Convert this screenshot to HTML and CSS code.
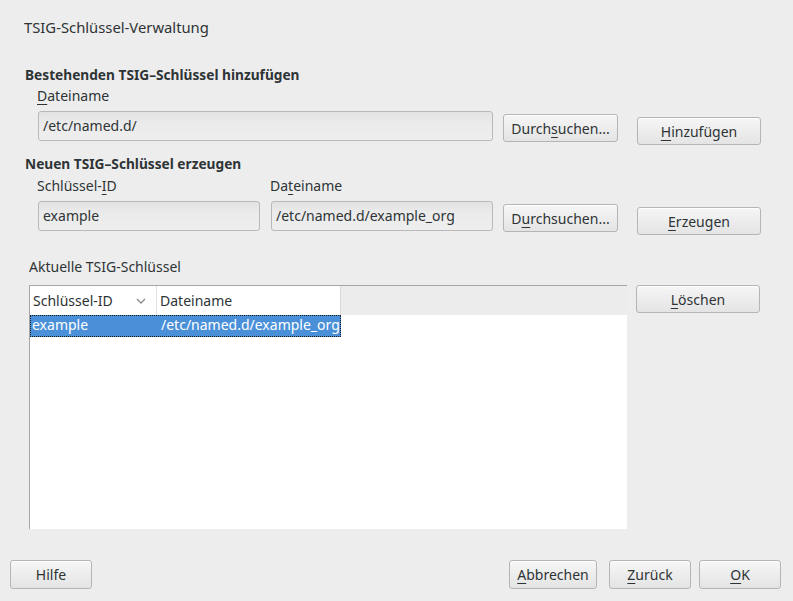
FILE: index.html
```html
<!DOCTYPE html>
<html lang="de">
<head>
<meta charset="utf-8">
<title>TSIG-Schlüssel-Verwaltung</title>
<link rel="stylesheet" href="styles.css">
</head>
<body>
<div class="dialog">
  <div class="title">TSIG-Schlüssel-Verwaltung</div>

  <div class="heading h1">Bestehenden TSIG–Schlüssel hinzufügen</div>
  <div class="label lab1"><u>D</u>ateiname</div>
  <div class="row row1">
    <div class="input wide">/etc/named.d/</div>
    <button class="btn browse b1">Durch<u>s</u>uchen...</button>
    <button class="btn action a1"><u>H</u>inzufügen</button>
  </div>

  <div class="heading h2">Neuen TSIG–Schlüssel erzeugen</div>
  <div class="row row2">
    <div class="field">
      <div class="label">Schlüssel-<u>I</u>D</div>
      <div class="input half">example</div>
    </div>
    <div class="field">
      <div class="label">Da<u>t</u>einame</div>
      <div class="input half">/etc/named.d/example_org</div>
    </div>
    <button class="btn browse b2">D<u>u</u>rchsuchen...</button>
    <button class="btn action a2"><u>E</u>rzeugen</button>
  </div>

  <div class="label current">Aktuelle TSIG-Schlüssel</div>
  <div class="tablerow">
    <div class="table">
      <div class="thead">
        <div class="th c1">Schlüssel-ID
          <svg class="sort" width="10" height="6" viewBox="0 0 10 6"><path d="M1 1 L5 5 L9 1" fill="none" stroke="#8a8a8a" stroke-width="1.3"/></svg>
        </div>
        <div class="th c2">Dateiname</div>
        <div class="th filler"></div>
      </div>
      <div class="tr selected">
        <div class="td c1">example</div>
        <div class="td c2">/etc/named.d/example_org</div>
      </div>
    </div>
    <button class="btn action del"><u>L</u>öschen</button>
  </div>

  <div class="footer">
    <button class="btn help">Hilfe</button>
    <div class="spacer"></div>
    <button class="btn cancel"><u>A</u>bbrechen</button>
    <button class="btn back"><u>Z</u>urück</button>
    <button class="btn ok"><u>O</u>K</button>
  </div>
</div>
</body>
</html>
```

FILE: styles.css
```css
* { box-sizing: border-box; }
html, body {
  margin: 0;
  padding: 0;
  background: #ededed;
}
body {
  font-family: "Noto Sans", "Open Sans", sans-serif;
  font-size: 14px;
  color: #2e3436;
  width: 793px;
  height: 601px;
  overflow: hidden;
}
u { text-decoration: underline; text-underline-offset: 3px; }

.dialog {
  display: flex;
  flex-direction: column;
  padding: 17px 0 0 0;
}
.title {
  line-height: 20px;
  padding-left: 24px;
  font-size: 14.8px;
}
.heading {
  font-weight: bold;
  line-height: 20px;
  padding-left: 25px;
  font-size: 13.7px;
}
.h1 { margin-top: 28px; }
.h2 { margin-top: 9px; }
.label { line-height: 20px; }
.lab1 { padding-left: 37px; margin-top: 1px; }

.row {
  display: flex;
  align-items: flex-start;
  padding-left: 38px;
}
.row1 { margin-top: 5px; }
.row2 { margin-top: 2px; }

.input {
  height: 30px;
  border: 1px solid #b9b9b9;
  border-radius: 3px;
  background: linear-gradient(#e2e2e2, #ebebeb 40%, #eeeeee);
  line-height: 28px;
  padding-left: 4px;
  color: #2e3436;
}
.wide { width: 455px; }
.half { width: 222px; }
.field { display: flex; flex-direction: column; }
.field .label { margin-left: -1px; margin-bottom: 5px; }
.field + .field { margin-left: 11px; }

.btn {
  font: inherit;
  color: #2e3436;
  border: 1px solid #b5b5b5;
  border-radius: 3px;
  background: linear-gradient(#f6f6f6, #e4e4e4);
  height: 28px;
  padding: 0;
  text-align: center;
  box-shadow: inset 0 1px 0 #ffffff;
}
.browse { width: 115px; margin-left: 10px; }
.action { width: 124px; }
.b1 { margin-top: 3px; }
.a1 { margin-top: 6px; margin-left: 19px; }
.b2 { margin-top: 28px; }
.a2 { margin-top: 31px; margin-left: 19px; }

.current { padding-left: 29px; margin-top: 22px; }

.tablerow {
  display: flex;
  align-items: flex-start;
  margin-top: 8px;
  padding-left: 29px;
}
.table {
  width: 598px;
  height: 244px;
  background: #ffffff;
  border-left: 1px solid #a6a6a6;
  border-top: 1px solid #a6a6a6;
}
.thead {
  display: flex;
  height: 29px;
}
.th {
  line-height: 29px;
  padding-left: 3px;
  background: #ffffff;
}
.thead .c1 {
  width: 127px;
  border-right: 1px solid #e2e2e2;
  position: relative;
}
.thead .c2 { width: 184px; border-right: 1px solid #d8d8d8; }
.th.filler { flex: 1; background: #ececec; }
.sort { position: absolute; right: 10px; top: 12px; }

.tr {
  display: flex;
  width: 311px;
  height: 22px;
  line-height: 20px;
}
.tr.selected {
  background: #4a90d9;
  color: #ffffff;
  outline: 1px dotted #1a1a1a;
  outline-offset: -1px;
}
.td { padding-left: 2px; }
.tr .c1 { width: 127px; }
.tr .c2 { width: 184px; padding-left: 4px; }

.del { margin-left: 9px; }

.footer {
  display: flex;
  margin-top: 31px;
  padding: 0 12px 0 10px;
}
.footer .btn { height: 29px; }
.help { width: 82px; }
.spacer { flex: 1; }
.cancel { width: 88px; }
.back { width: 82px; margin-left: 12px; }
.ok { width: 82px; margin-left: 8px; }
```
